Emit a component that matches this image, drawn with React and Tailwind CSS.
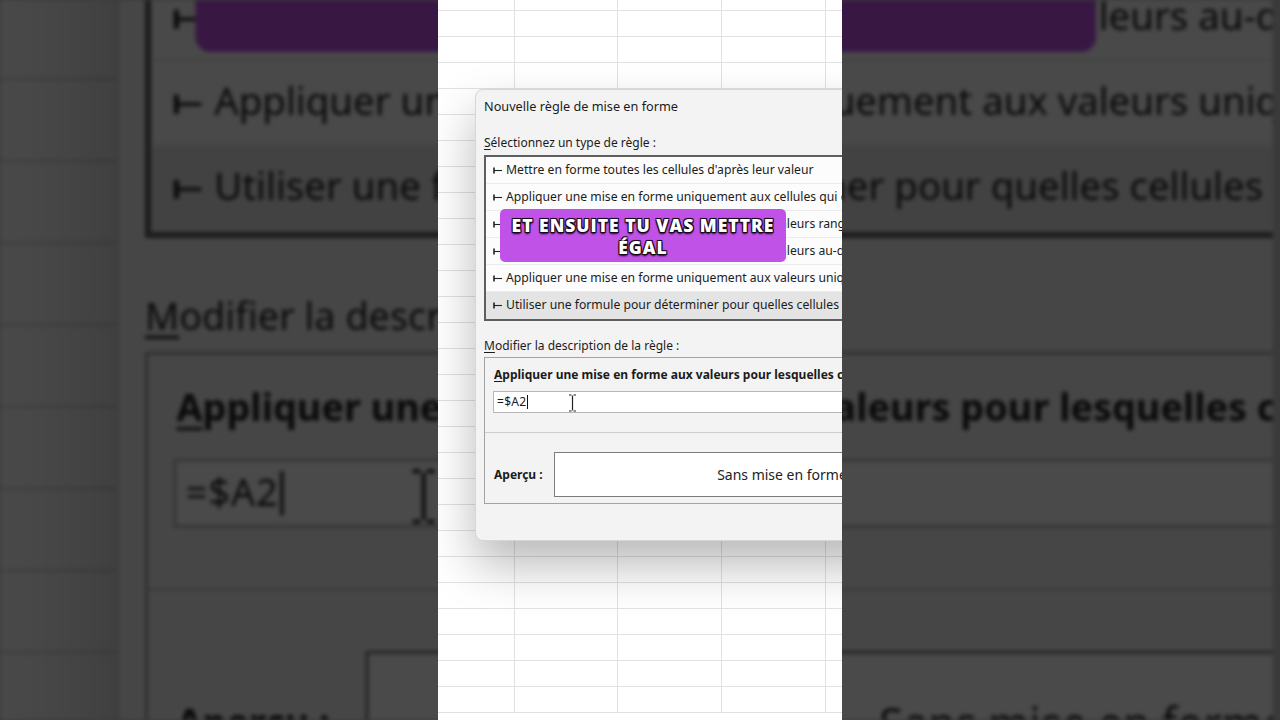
import React from "react";

const rules = [
  "Mettre en forme toutes les cellules d'après leur valeur",
  "Appliquer une mise en forme uniquement aux cellules qui contiennent",
  "Appliquer une mise en forme uniquement aux valeurs rangées parmi les premières ou les dernières valeurs",
  "Appliquer une mise en forme uniquement aux valeurs au-dessus ou en dessous de la moyenne",
  "Appliquer une mise en forme uniquement aux valeurs uniques ou aux doublons",
  "Utiliser une formule pour déterminer pour quelles cellules le format sera appliqué",
];

function Arrow() {
  return (
    <svg width="9" height="7" viewBox="0 0 9 7" className="shrink-0">
      <path d="M1 0.5v6" stroke="#222" strokeWidth="1.6" />
      <path d="M1 3.5h8" stroke="#222" strokeWidth="1.1" />
    </svg>
  );
}

function Sheet() {
  const rows = Array.from({ length: 28 });
  return (
    <div className="flex flex-col">
      {rows.map((_, i) => (
        <div key={i} className={`flex ${i === 0 ? "h-[11px]" : "h-[26px]"}`}>
          <div className="w-[77px] shrink-0 border-b border-r border-[#e1e1e1]" />
          <div className="w-[103px] shrink-0 border-b border-r border-[#e1e1e1]" />
          <div className="w-[104px] shrink-0 border-b border-r border-[#e1e1e1]" />
          <div className="w-[104px] shrink-0 border-b border-r border-[#e1e1e1]" />
          <div className="w-[104px] shrink-0 border-b border-r border-[#e1e1e1]" />
        </div>
      ))}
    </div>
  );
}

function Dialog() {
  return (
    <div className="absolute left-[37px] top-[89px] w-[560px] h-[452px] rounded-lg border border-[#d6d6d6] bg-[#f3f3f3] shadow-[0_24px_48px_rgba(0,0,0,0.28)] pl-2 pt-2 text-[#1b1b1b]">
      {/* title */}
      <div className="text-[12.7px] leading-4">Nouvelle règle de mise en forme</div>

      {/* rule type list */}
      <div className="mt-[21px] text-[12px] leading-4">
        <span className="underline underline-offset-2">S</span>électionnez un type de règle :
      </div>
      <div className="mt-1 mr-2 border-2 border-[#5e5e5e] bg-[#fcfcfc]">
        {rules.map((rule, i) => (
          <div
            key={i}
            className={`flex h-[27px] items-center gap-[4px] whitespace-nowrap pl-[7px] text-[12.2px] ${
              i === rules.length - 1 ? "bg-[#e4e4e4]" : "border-b border-[#ececec]"
            }`}
          >
            <Arrow />
            <span>{rule}</span>
          </div>
        ))}
      </div>

      {/* description */}
      <div className="mt-[17px] text-[12px] leading-4">
        <span className="underline underline-offset-2">M</span>odifier la description de la règle :
      </div>
      <div className="mt-[3px] mr-2 border border-[#a3a3a3]">
        <div className="pl-[9px] pt-[9px] text-[12px] font-bold leading-4 whitespace-nowrap">
          <span className="underline underline-offset-2">A</span>ppliquer une mise en forme aux valeurs pour lesquelles cette formule est vraie :
        </div>
        <div className="ml-2 mr-2 mt-2 flex h-[22px] items-center border border-[#b8b8b8] bg-white pl-[3px] text-[12px]">
          <span className="tracking-[0.3px]">=$A2</span>
          <span className="ml-px h-[14px] w-px bg-[#111]" />
        </div>
        <div className="mt-[19px] border-t border-[#cdcdcd]" />
        <div className="mt-[19px] mb-[6px] flex items-center">
          <div className="w-[69px] pl-[9px] text-[12px] font-bold">Aperçu :</div>
          <div className="flex h-[45px] w-[456px] items-center justify-center border border-[#7c7c7c] bg-white text-[14px] text-[#222]">
            Sans mise en forme
          </div>
        </div>
      </div>
    </div>
  );
}

function Caption() {
  return (
    <div className="absolute left-[62px] top-[209px] w-[286px] h-[53px] rounded-[5px] bg-[#c052e8] flex flex-col items-center justify-center font-['Open_Sans',sans-serif] text-[17.5px] font-extrabold leading-[22px] tracking-[1px] text-white [text-shadow:0_0_2px_#1a0a20,1px_1px_0_#1a0a20,-1px_-1px_0_#1a0a20,1px_-1px_0_#1a0a20,-1px_1px_0_#1a0a20,0_2px_2px_#1a0a20]">
      <div>ET ENSUITE TU VAS METTRE</div>
      <div>ÉGAL</div>
    </div>
  );
}

function IBeam() {
  return (
    <svg width="9" height="18" viewBox="0 0 9 18" className="absolute left-[130px] top-[394px]">
      <path d="M1 1h2.5M5.5 1H8M4.5 1.5v15M1 17h2.5M5.5 17H8" stroke="#222" strokeWidth="1.2" fill="none" />
    </svg>
  );
}

function Scene() {
  return (
    <div className="relative w-[404px] h-[720px] overflow-hidden bg-white">
      <Sheet />
      <Dialog />
      <IBeam />
      <Caption />
    </div>
  );
}

export default function App() {
  return (
    <div className="relative flex h-[720px] w-[1280px] justify-center overflow-hidden bg-[#3a3a3a] font-['Noto_Sans',sans-serif]">
      {/* blurred, zoomed backdrop */}
      <div className="absolute inset-0 overflow-hidden blur-[2px] brightness-[0.29]">
        <div className="origin-top-left scale-[3.15] -translate-y-[773px]">
          <Scene />
        </div>
      </div>

      {/* main video strip */}
      <div className="relative z-10">
        <Scene />
      </div>
    </div>
  );
}
